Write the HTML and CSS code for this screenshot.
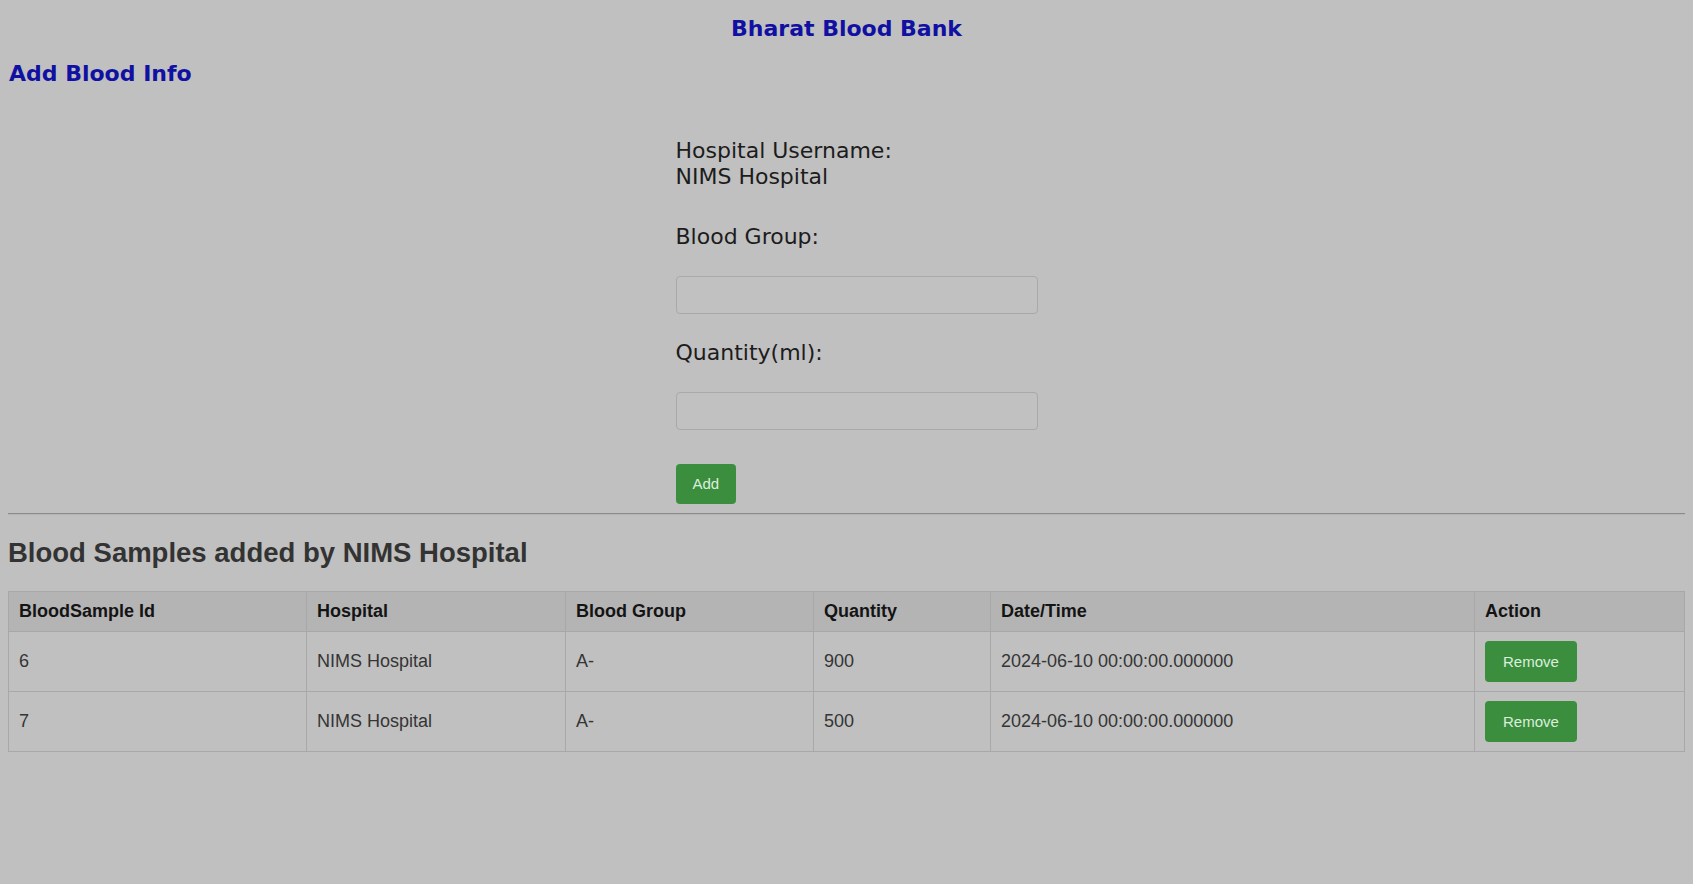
FILE: index.html
```html
<!DOCTYPE html>
<html lang="en">
<head>
<meta charset="utf-8">
<title>Bharat Blood Bank</title>
<link rel="stylesheet" href="styles.css">
</head>
<body>
<h1 class="site-title">Bharat Blood Bank</h1>
<h2 class="page-title">Add Blood Info</h2>
<div class="form-wrap">
  <form class="blood-form">
    <div class="info">Hospital Username:<br>NIMS Hospital</div>
    <label class="field-label label-group">Blood Group:</label>
    <input class="field-input" type="text">
    <label class="field-label label-qty">Quantity(ml):</label>
    <input class="field-input" type="text">
    <button type="button" class="btn btn-add">Add</button>
  </form>
</div>
<hr class="divider">
<h2 class="section-title">Blood Samples added by NIMS Hospital</h2>
<table class="samples">
  <thead>
    <tr>
      <th class="c1">BloodSample Id</th>
      <th class="c2">Hospital</th>
      <th class="c3">Blood Group</th>
      <th class="c4">Quantity</th>
      <th class="c5">Date/Time</th>
      <th class="c6">Action</th>
    </tr>
  </thead>
  <tbody>
    <tr>
      <td>6</td>
      <td>NIMS Hospital</td>
      <td>A-</td>
      <td>900</td>
      <td>2024-06-10 00:00:00.000000</td>
      <td><button type="button" class="btn btn-remove">Remove</button></td>
    </tr>
    <tr>
      <td>7</td>
      <td>NIMS Hospital</td>
      <td>A-</td>
      <td>500</td>
      <td>2024-06-10 00:00:00.000000</td>
      <td><button type="button" class="btn btn-remove">Remove</button></td>
    </tr>
  </tbody>
</table>
</body>
</html>
```
FILE: styles.css
```css
html, body {
  background: #c0c0c0;
}
body {
  margin: 0;
  padding: 8px;
  font-family: "DejaVu Sans", Verdana, sans-serif;
  color: #1c1c1c;
}
.site-title {
  margin: 8px 0 0;
  font-size: 22px;
  font-weight: bold;
  line-height: 25.6px;
  text-align: center;
  color: #1010a2;
}
.page-title {
  margin: 19px 0 0 1px;
  font-size: 22px;
  font-weight: bold;
  line-height: 25.6px;
  color: #1010a2;
}
.form-wrap {
  display: flex;
  justify-content: center;
  margin-top: 52px;
}
.blood-form {
  width: 342px;
  display: flex;
  flex-direction: column;
  align-items: flex-start;
}
.info, .field-label {
  display: block;
  font-size: 22px;
  line-height: 25.6px;
  color: #1c1c1c;
}
.label-group {
  margin-top: 35px;
}
.label-qty {
  margin-top: 26px;
}
.field-input {
  box-sizing: border-box;
  width: 362px;
  height: 38px;
  margin: 26px 0 0 0;
  border: 1px solid #a9a9a9;
  border-radius: 4px;
  background: #c1c1c1;
}
.btn {
  font-family: "Liberation Sans", Arial, sans-serif;
  font-size: 15px;
  border: none;
  border-radius: 4px;
  background: #3a8e3e;
  color: #dcefdc;
  cursor: pointer;
}
.btn-add {
  margin: 34px 0 0 0;
  height: 40px;
  padding: 0 17px;
}
.divider {
  margin: 9px 0 0;
  border: none;
  border-top: 1px solid #8c8c8c;
  border-bottom: 1px solid #b4b4b4;
}
.section-title {
  margin: 22px 0 0;
  font-family: "Liberation Sans", Arial, sans-serif;
  font-size: 27.5px;
  font-weight: bold;
  color: #333;
}
.samples {
  margin-top: 22px;
  width: 100%;
  border-collapse: collapse;
  table-layout: fixed;
  font-family: "Liberation Sans", Arial, sans-serif;
  font-size: 18px;
}
.samples th, .samples td {
  box-sizing: border-box;
  border: 1px solid #a8a8a8;
  padding: 9px 10px;
  text-align: left;
  vertical-align: middle;
}
.samples th {
  background: #b4b4b4;
  color: #141414;
  font-weight: bold;
}
.samples td {
  color: #353535;
}
.c1 { width: 298px; }
.c2 { width: 259px; }
.c3 { width: 248px; }
.c4 { width: 177px; }
.c5 { width: 484px; }
.btn-remove {
  display: block;
  height: 41px;
  padding: 0 18px;
}
```
